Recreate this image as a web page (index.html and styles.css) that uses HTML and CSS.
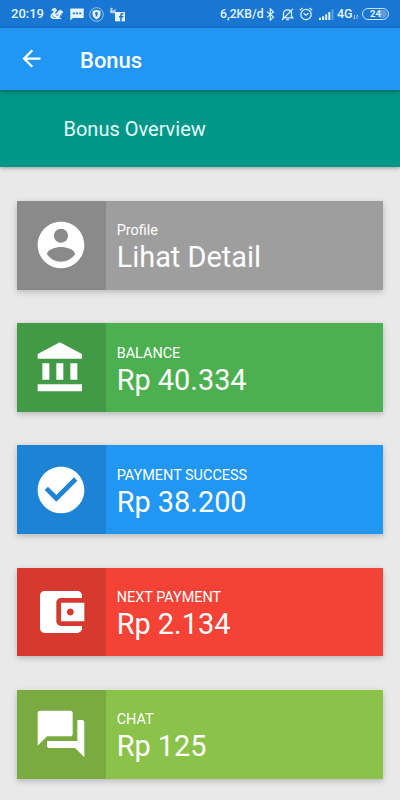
FILE: index.html
```html
<!DOCTYPE html>
<html lang="id">
<head>
<meta charset="utf-8">
<meta name="viewport" content="width=device-width, initial-scale=1">
<title>Bonus</title>
<link rel="stylesheet" href="styles.css">
</head>
<body>
<div class="status">
  <span class="time">20:19</span>
  <svg class="squirrel" width="14" height="14" viewBox="0 0 14 14"><path d="M1.500 4.200C1 1.800 3.600.2 5.600 1.200c1.800 1 1.500 3-.1 4C4.500 6 5 7 6.200 6.600L7.500 5.300C7.800 3.800 9 3 10.200 3.200l.6-1 .5 1.300c1.200.4 1.800 1.200 1.900 2.100-.5.8-1.300 1-2.200 1l.8 1.500-.8.7-1-1c.4 1.700-.2 2.800-.8 3.300h2v1H3.500C1.200 12.100.3 10.500.5 8.700.7 7.100 2 6.400 3 5.400c.8-.8.8-1.800.1-1.900-.6-.1-.6.6-1.600.7z"/><path class="cut" d="M2.500 8.500c.2 1.700 1.500 2.300 3 1.800M6 8.300c.9-.7 1.800-.3 2.300.5"/></svg>
  <svg class="message" width="14" height="13" viewBox="0 0 14 13"><path d="M.3.500h13.400v9.500H3L.3 12.500z"/><path class="hole" d="M2.800 4.500h2v1.700h-2zM6 4.500h2v1.700H6zM9.200 4.500h2v1.700h-2z"/></svg>
  <svg class="shield" width="15" height="15" viewBox="0 0 15 15"><circle class="ring" cx="7.500" cy="7.500" r="6.800"/><path d="M7.500 2.800 11.500 4v3.500c0 2.300-2 4-4 5-2-1-4-2.700-4-5V4z"/><path class="hole" d="M7.500 5a1.500 1.500 0 0 1 .7 2.800v1.700H6.800V7.800A1.500 1.500 0 0 1 7.500 5z"/></svg>
  <svg class="social" width="17" height="15" viewBox="0 0 17 15"><path opacity=".75" d="M1 2.500C1 .5 3.500.2 3.800 2L3 3.800l2-.8c.5-1 1.600-1.100 2-.3l-.7 1.100.3 2.400H2C.2 5.500.6 4 2 3z"/><path d="M6 5h10v9.300H6z"/><path class="hole" d="M11.200 14.300V10.500H9.900V9h1.300V8c0-1.400.9-2.100 2.200-2.100h1.200v1.500h-.9c-.6 0-.9.2-.9.800V9h1.700l-.3 1.500h-1.400v3.800z"/></svg>
  <span class="speed">6,2KB/d</span>
  <svg class="bluetooth" width="9" height="13" viewBox="0 0 9 13"><path class="line" d="m1 3.600 6.500 5.500-3.200 3V.900l3.200 3L1 9.400"/></svg>
  <svg class="bell" width="13" height="13" viewBox="0 0 13 13"><path class="line" d="M2.500 9.800V5.500C2.500 3.300 4.200 1.900 6.500 1.900s4 1.400 4 3.600v3l1.200 1.300H1.400zM5.300 11.700h2.500M12 .8 1 12"/></svg>
  <svg class="alarm" width="14" height="14" viewBox="0 0 14 14"><path class="line" d="M.8 3.300 3.500 1M13.200 3.300 10.500 1M4.600 6.300 7 8.200l2.500-1.900"/><circle class="line" cx="7" cy="7.500" r="5.200"/></svg>
  <svg class="signal" width="15" height="11" viewBox="0 0 15 11"><path d="M0 8.800h2V11H0zM3.100 7.300h2V11h-2zM6.200 5.300h2V11h-2zM9.300 3h2v8h-2z"/><path opacity=".35" d="M12.500.300h2V11h-2z"/></svg>
  <span class="network">4G</span>
  <svg class="arrows" width="6" height="6" viewBox="0 0 6 6"><path class="thin" d="M1.500 1v4M.4 3.800l1.100 1.300M4 5V1l1.300 1.300"/></svg>
  <span class="battery">24</span>
</div>
<header class="appbar">
  <svg class="back" width="27" height="27" viewBox="0 0 24 24"><path d="M20 11H7.830l5.590-5.590L12 4l-8 8 8 8 1.410-1.410L7.830 13H20v-2z"/></svg>
  <h1>Bonus</h1>
</header>
<section class="overview"><h2>Bonus Overview</h2></section>
<main class="cards">
  <article class="card grey">
    <div class="icon"><svg viewBox="0 0 24 24"><path d="M12 2C6.480 2 2 6.480 2 12s4.480 10 10 10 10-4.480 10-10S17.520 2 12 2zm0 3c1.660 0 3 1.340 3 3s-1.340 3-3 3-3-1.340-3-3 1.340-3 3-3zm0 14.200c-2.500 0-4.710-1.280-6-3.220.030-1.990 4-3.080 6-3.080 1.990 0 5.970 1.090 6 3.080-1.290 1.940-3.500 3.220-6 3.220z"/></svg></div>
    <div class="content"><div class="label">Profile</div><div class="number">Lihat Detail</div></div>
  </article>
  <article class="card green">
    <div class="icon"><svg viewBox="0 0 24 24"><path d="M4 10v7h3v-7H4zm6 0v7h3v-7h-3zM2 22h19v-3H2v3zm14-12v7h3v-7h-3zm-4.500-9L2 6v2h19V6l-9.500-5z"/></svg></div>
    <div class="content"><div class="label">BALANCE</div><div class="number">Rp 40.334</div></div>
  </article>
  <article class="card blue">
    <div class="icon"><svg viewBox="0 0 24 24"><path d="M12 2C6.480 2 2 6.480 2 12s4.480 10 10 10 10-4.480 10-10S17.520 2 12 2zm-2 15l-5-5 1.410-1.410L10 14.170l7.590-7.590L19 8l-9 9z"/></svg></div>
    <div class="content"><div class="label">PAYMENT SUCCESS</div><div class="number">Rp 38.200</div></div>
  </article>
  <article class="card red">
    <div class="icon"><svg viewBox="0 0 24 24"><path d="M21 18v1c0 1.100-.9 2-2 2H5c-1.110 0-2-.9-2-2V5c0-1.100.89-2 2-2h14c1.100 0 2 .9 2 2v1h-9c-1.110 0-2 .9-2 2v8c0 1.100.89 2 2 2h9zm-9-2h10V8H12v8zm4-2.500c-.83 0-1.500-.67-1.500-1.500s.67-1.500 1.500-1.500 1.500.67 1.500 1.500-.67 1.500-1.500 1.500z"/></svg></div>
    <div class="content"><div class="label">NEXT PAYMENT</div><div class="number">Rp 2.134</div></div>
  </article>
  <article class="card lime">
    <div class="icon"><svg viewBox="0 0 24 24"><path d="M21 6h-2v9H6v2c0 .55.45 1 1 1h11l4 4V7c0-.55-.45-1-1-1zm-4 6V3c0-.55-.45-1-1-1H3c-.55 0-1 .45-1 1v14l4-4h10c.55 0 1-.45 1-1z"/></svg></div>
    <div class="content"><div class="label">CHAT</div><div class="number">Rp 125</div></div>
  </article>
</main>
</body>
</html>
```
FILE: styles.css
```css
* { box-sizing: border-box; }
body {
  margin: 0;
  height: 800px;
  overflow: hidden;
  background: #e9e9e9;
  color: #fff;
  font-family: Roboto, sans-serif;
}
svg { display: block; flex: none; fill: currentColor; }
.status {
  display: flex;
  align-items: center;
  height: 28px;
  padding: 0 11px;
  background: #1976d2;
  color: #e3f4ff;
  font-weight: 500;
  font-size: 13px;
  line-height: 14px;
  white-space: nowrap;
}
.status .line, .status .ring, .status .thin, .status .cut { fill: none; stroke: currentColor; }
.status .line { stroke-width: 1.200; }
.status .ring { stroke-width: .8; opacity: .8; }
.status .thin { stroke-width: .8; opacity: .8; }
.status .cut { stroke: #1976d2; stroke-width: .9; }
.status .hole { fill: #1976d2; }
.time { width: 39px; }
.message { margin-left: 6px; }
.shield { margin-left: 5px; }
.social { margin-left: 5px; }
.speed { margin-left: auto; width: 46px; font-size: 12.200px; }
.bell { margin-left: 6px; }
.alarm { margin-left: 5px; }
.signal { margin-left: 6px; }
.network { margin-left: 3px; width: 16px; font-size: 12.500px; }
.arrows { margin-top: 5px; }
.battery {
  width: 27px;
  height: 12px;
  margin-left: 3px;
  border: 1px solid #c5e3fa;
  border-radius: 6px;
  background: linear-gradient(90deg, transparent 70%, #5c9cdf 70%) content-box;
  padding: 1px;
  font-size: 9.500px;
  font-weight: 700;
  line-height: 8px;
  text-align: center;
}
.appbar {
  display: flex;
  align-items: center;
  position: relative;
  height: 62px;
  padding: 0 17px 0 18px;
  background: #2196f3;
  box-shadow: 0 1px 4px rgba(0, 0, 0, .4);
}
.appbar h1 { margin: 3px 0 0 35px; font-size: 22px; line-height: 26px; font-weight: 500; }
.back { margin-top: -1px; }
.overview {
  display: flex;
  align-items: center;
  height: 77px;
  padding-left: 63.500px;
  background: #009688;
  box-shadow: 0 1px 4px rgba(0, 0, 0, .35);
}
.overview h2 { margin: 0; font-size: 20px; line-height: 24px; font-weight: 400; color: #e5fffb; }
.cards {
  display: flex;
  flex-direction: column;
  gap: 33.330px;
  padding: 34px 17px 0;
}
.card {
  display: flex;
  flex: none;
  height: 88.890px;
  box-shadow: 0 2px 6px rgba(0, 0, 0, .22);
}
.icon {
  display: grid;
  place-items: center;
  width: 88.890px;
  background: rgba(0, 0, 0, .12);
}
.icon svg { width: 56px; height: 56px; }
.content { padding: 20.400px 11px 0 10.800px; }
.label { font-size: 14.440px; line-height: 20px; }
.number { font-size: 28.890px; line-height: 32px; }
.grey { background: #9e9e9e; }
.green { background: #4caf50; }
.blue { background: #2196f3; }
.red { background: #f44336; }
.lime { background: #8bc34a; }
```
